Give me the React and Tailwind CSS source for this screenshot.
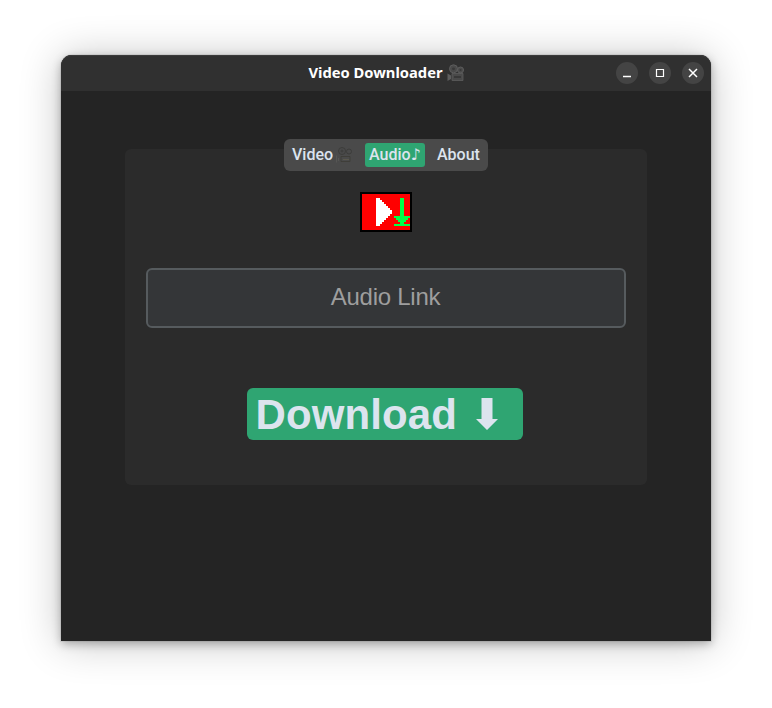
function Camera({ className, body, line, lens }) {
  return (
    <svg viewBox="0 0 18 18" className={className}>
      <g fill={body} stroke={line}>
        <circle cx="6.500" cy="4.800" r="4" />
        <circle cx="13.500" cy="6" r="3" />
      </g>
      <circle cx="6.500" cy="4.800" r="1.400" fill={lens} />
      <circle cx="13.500" cy="6" r="1" fill={lens} />
      <path d="M.5 9.500L4 11.500v3.500L.5 17z" fill={line} />
      <path d="M5 9.500h11v7H5z" fill={body} stroke={line} strokeWidth=".8" />
      <path d="M7 12h7v2H7z" fill={lens} />
    </svg>
  );
}

function TabCamera({ className }) {
  return (
    <svg viewBox="0 0 18 18" className={className} fill="none" stroke="#3c3c3a">
      <circle cx="7" cy="5" r="3.500" />
      <circle cx="7" cy="5" r="1" />
      <circle cx="14" cy="5.500" r="2.500" />
      <path d="M1.500 9.500v7" stroke="#565654" />
      <path d="M3.500 12v3" stroke="#565654" />
      <path d="M6 10.500h9v5H6z" stroke="#3f3e39" />
      <path d="M8 13.500h6" stroke="#5a584c" />
    </svg>
  );
}

function WindowButton({ label, children }) {
  return (
    <button aria-label={label} className="h-[22px] w-[22px] rounded-full bg-[#444444]">
      <svg viewBox="0 0 22 22" className="block h-[22px] w-[22px]" fill="none" stroke="#ffffff">
        {children}
      </svg>
    </button>
  );
}

function Logo() {
  return (
    <svg viewBox="0 0 26 20" className="block h-10 w-[52px]" shapeRendering="crispEdges">
      <path fill="#000000" d="M0 0h26v20H0z" />
      <path fill="#ff0000" d="M1 1h24v18H1z" />
      <path
        fill="#ffffff"
        d="M8 3h2v1h1v1h1v1h1v1h1v1h1v1h1v2h-1v1h-1v1h-1v1h-1v1h-1v1h-1v1H8z"
      />
      <path fill="#00ff48" d="M20 3h2v9h3v1h-1v1h-1v1h-1v1h3v1h-8v-1h3v-1h-1v-1h-1v-1h-1v-1h3z" />
    </svg>
  );
}

export default function App() {
  return (
    <div className="h-[708px] w-[772px] overflow-hidden bg-white pl-[61px] pt-[55px]">
      <div className="h-[586px] w-[650px] rounded-t-[11px] bg-[#242424] shadow-[0_3px_10px_rgba(0,0,0,0.28),0_2px_42px_rgba(0,0,0,0.24),0_0_0_1px_rgba(0,0,0,0.06)]">
        <header className="grid h-9 grid-cols-[1fr_auto_1fr] items-center rounded-t-[11px] bg-[#303030] shadow-[inset_0_1px_0_#3b3b3b]">
          <span />
          <h1 className="flex items-center gap-1 whitespace-nowrap pb-[2px] pl-px font-['Noto_Sans',sans-serif] text-[14.720px] font-bold leading-5 text-white">
            <span>Video Downloader</span>
            <Camera className="mt-px h-[18px] w-[18px]" body="#4a4a4a" line="#5d5d5d" lens="#383838" />
          </h1>
          <div className="flex justify-end gap-[11px] pr-[7px]">
            <WindowButton label="Minimize">
              <path d="M7 14.500h8" strokeWidth="1.500" />
            </WindowButton>
            <WindowButton label="Maximize">
              <path d="M7.500 7.500h7v7h-7z" strokeWidth="1.200" />
            </WindowButton>
            <WindowButton label="Close">
              <path d="M7 7l8 8M15 7l-8 8" strokeWidth="1.500" />
            </WindowButton>
          </div>
        </header>
        <main className="px-16 pt-[58px]">
          <section className="flex h-[336px] w-[522px] flex-col items-center rounded-md bg-[#2b2b2b]">
            <nav className="-mt-[10px] flex h-8 w-[204px] shrink-0 rounded-md bg-[#4a4a4a] py-1 font-[Roboto,sans-serif] text-base font-medium leading-[23px] text-[#dce4ee]">
              <button className="flex w-[81px] items-start pl-2">
                <span>Video</span>
                <TabCamera className="ml-[2px] mt-[3px] h-[18px] w-[18px]" />
              </button>
              <button className="flex w-[60px] items-start rounded-[3px] bg-[#2fa572] pl-1">
                <span>Audio</span>
                <span className="font-['DejaVu_Sans',sans-serif] text-base font-bold">♪</span>
              </button>
              <button className="flex items-start pl-3">
                <span>About</span>
              </button>
            </nav>
            <div className="mt-[21px]">
              <Logo />
            </div>
            <input
              placeholder="Audio Link"
              className="mt-9 h-[60px] w-[480px] rounded-md border-2 border-[#565b5e] bg-[#343638] pb-[2px] pr-px text-center font-['Liberation_Sans',sans-serif] text-2xl tracking-[-0.250px] text-[#dce4ee] placeholder:text-[#9e9e9e] placeholder:opacity-100"
            />
            <button className="mr-[2px] mt-[60px] flex h-[52px] w-[276px] items-center rounded-md bg-[#2fa572] pl-[8.500px] font-['Liberation_Sans',sans-serif] text-[42px] font-bold leading-[52px] text-[#dce4ee]">
              <span className="pt-[2px] tracking-[0.100px]">Download</span>
              <svg viewBox="0 0 22 32" className="ml-[19.300px] h-8 w-[22px]" fill="#dce4ee">
                <path d="M5.500 0h11v21H22L11 32 0 21h5.500z" />
              </svg>
            </button>
          </section>
        </main>
      </div>
    </div>
  );
}
